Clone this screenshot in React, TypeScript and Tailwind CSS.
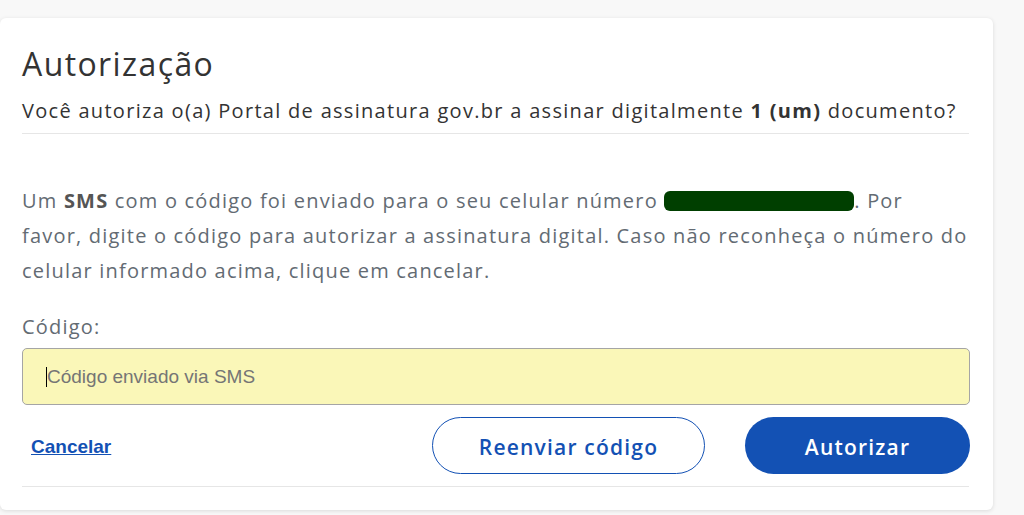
import React from 'react';

const App: React.FC = () => {
  return (
    <div className="min-h-[515px] w-[1024px] bg-[#f8f8f8] pt-[18px]" style={{ fontFamily: '"Open Sans", sans-serif' }}>
      <div className="w-[993px] rounded-md bg-white px-[22px] pt-[26px] pb-[23px] shadow-[0_1px_4px_rgba(0,0,0,0.12)]">
        {/* Header */}
        <h1 className="text-[32px] leading-[40px] tracking-[1.4px] text-[#333333]">Autorização</h1>
        <p className="mt-[13px] text-[20px] leading-[28px] tracking-[1.3px] text-[#333333]">
          Você autoriza o(a) Portal de assinatura gov.br a assinar digitalmente <strong className="font-bold">1 (um)</strong> documento?
        </p>
        <div className="mt-[8px] mr-[2px] h-px bg-[#e6e6e6]" />

        {/* Message */}
        <p className="mt-[49px] text-[20px] leading-[35px] tracking-[1.2px] text-[#636b73]">
          Um <strong className="font-bold text-[#555]">SMS</strong> com o código foi enviado para o seu celular número{' '}
          <span className="inline-block h-[20px] w-[190px] translate-y-[3px] rounded-[6px] bg-[#003f00] align-baseline" />. Por
          <br />
          favor, digite o código para autorizar a assinatura digital. Caso não reconheça o número do
          <br />
          celular informado acima, clique em cancelar.
        </p>

        {/* Code field */}
        <label className="mt-[25px] block text-[20px] leading-[28px] tracking-[1.2px] text-[#636b73]">Código:</label>
        <div className="relative mt-[7px] mr-[1px]">
          <input
            type="text"
            placeholder="Código enviado via SMS"
            className="h-[57px] w-full rounded-[5px] border border-[#a5a5a5] bg-[#faf7b8] pl-[24px] text-[19px] text-[#333] placeholder:text-[#757575] outline-none"
            style={{ fontFamily: '"Liberation Sans", Arial, sans-serif' }}
          />
          {/* text caret */}
          <span className="pointer-events-none absolute left-[24px] top-[19px] h-[20px] w-px bg-black" />
        </div>

        {/* Actions */}
        <div className="mt-[12px] mr-[1px] flex items-center">
          <a
            href="#"
            className="ml-[9px] mt-[4px] text-[19px] font-bold text-[#1351b4] underline"
            style={{ fontFamily: '"Liberation Sans", Arial, sans-serif' }}
          >
            Cancelar
          </a>
          <div className="ml-auto flex gap-[40px]">
            <button className="h-[57px] w-[273px] rounded-full border border-[#1351b4] bg-white pt-[4px] text-[21px] font-semibold tracking-[1.2px] text-[#1351b4]">
              Reenviar código
            </button>
            <button className="h-[57px] w-[225px] rounded-full bg-[#1351b4] pt-[4px] text-[21px] font-semibold tracking-[1.2px] text-white">
              Autorizar
            </button>
          </div>
        </div>
        <div className="mt-[12px] mr-[2px] h-px bg-[#e6e6e6]" />
      </div>
    </div>
  );
};

export default App;
